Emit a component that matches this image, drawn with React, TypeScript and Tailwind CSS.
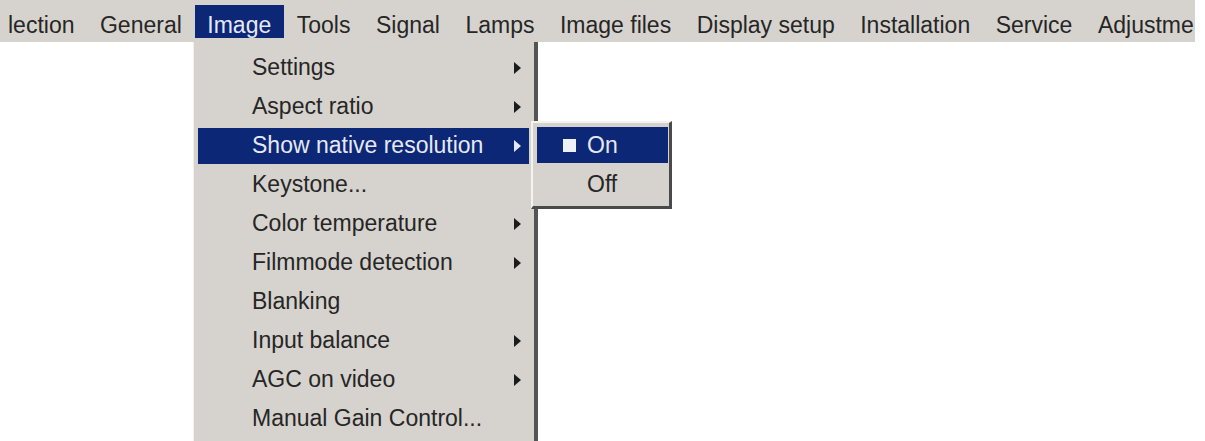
const barItems = [
  'General',
  'Image',
  'Tools',
  'Signal',
  'Lamps',
  'Image files',
  'Display setup',
  'Installation',
  'Service',
  'Adjustme',
]

const imageMenu = [
  { label: 'Settings', sub: true },
  { label: 'Aspect ratio', sub: true },
  { label: 'Show native resolution', sub: true, active: true },
  { label: 'Keystone...', sub: false },
  { label: 'Color temperature', sub: true },
  { label: 'Filmmode detection', sub: true },
  { label: 'Blanking', sub: false },
  { label: 'Input balance', sub: true },
  { label: 'AGC on video', sub: true },
  { label: 'Manual Gain Control...', sub: false },
]

function Arrow({ light }: { light?: boolean }) {
  return (
    <span
      className={
        'ml-auto mr-[8px] h-0 w-0 border-y-[6px] border-l-[7px] border-y-transparent ' +
        (light ? 'border-l-[#e6e9f5]' : 'border-l-[#1c1c1c]')
      }
    />
  )
}

export default function App() {
  return (
    <div className="relative h-[441px] w-[1205px] overflow-hidden bg-white font-['Liberation_Sans',Arial,sans-serif] text-[23px] text-[#262626]">
      {/* Menu bar */}
      <div className="flex h-[42px] w-[1195px] overflow-hidden whitespace-nowrap bg-[#d6d3ce]">
        <div className="mt-[5px] h-[33px] shrink-0 pl-[8px] pr-[12.75px] pt-[9px] leading-none">lection</div>
        {barItems.map((item) => (
          <div
            key={item}
            className={
              'mt-[5px] h-[33px] shrink-0 px-[12.75px] pt-[9px] leading-none ' +
              (item === 'Image' ? 'bg-[#0c2776] text-[#e6e9f5]' : '')
            }
          >
            {item}
          </div>
        ))}
      </div>

      {/* Image dropdown */}
      <div className="absolute left-[193px] top-[42px] w-[345px] border-l border-r-[4px] border-l-[#f2f1ee] border-r-[#555] bg-[#d6d3ce] pl-[4px] pr-[5px] pt-[6px] pb-[20px]">
        {imageMenu.map((item) => (
          <div key={item.label} className="h-[39px] py-[1.5px]">
            <div
              className={
                'flex h-[36px] items-center whitespace-nowrap pl-[54px] leading-none ' +
                (item.active ? 'bg-[#0c2776] text-[#e6e9f5]' : '')
              }
            >
              <span>{item.label}</span>
              {item.sub && <Arrow light={item.active} />}
            </div>
          </div>
        ))}
      </div>

      {/* Submenu */}
      <div className="absolute left-[531px] top-[121px] w-[141px] border-l-[2px] border-t-[2px] border-r-[3px] border-b-[3px] border-l-[#f4f3f0] border-t-[#f4f3f0] border-r-[#4a4a4a] border-b-[#4a4a4a] bg-[#d6d3ce] pl-[4px] pr-[1px] pt-[4px] pb-[3px] leading-none">
        <div className="flex h-[36px] items-center bg-[#0c2776] text-[#e6e9f5]">
          <span className="ml-[26px] h-[13px] w-[13px] bg-[#eef0f8]" />
          <span className="ml-[11px]">On</span>
        </div>
        <div className="flex h-[40px] items-center pt-[2px]">
          <span className="ml-[50px]">Off</span>
        </div>
      </div>
    </div>
  )
}
